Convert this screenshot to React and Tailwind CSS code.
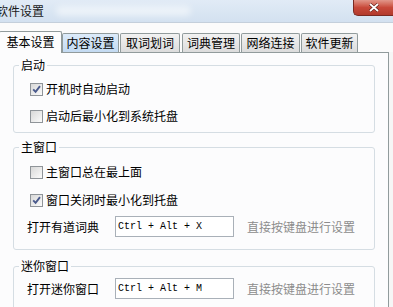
import React from "react";

const Check = ({ checked }) => (
  <span className="w-[13px] h-[13px] border border-[#8f9499] bg-gradient-to-br from-[#d8d8d8] to-[#fbfbfb] flex items-center justify-center shrink-0">
    {checked && (
      <svg width="9" height="9" viewBox="0 0 9 9">
        <path d="M1.2 4.3 L3.6 6.8 L8 1.2" stroke="#4a5a8c" strokeWidth="1.9" fill="none" />
      </svg>
    )}
  </span>
);

const CheckRow = ({ checked, label, className = "" }) => (
  <div className={"h-[18px] flex items-center pl-[16px] " + className}>
    <Check checked={checked} />
    <span className="ml-[3px] leading-[18px]">{label}</span>
  </div>
);

const KeyRow = ({ label, keys, className = "" }) => (
  <div className={"flex items-center pl-[13px] " + className}>
    <span className="w-[88px] leading-[18px]">{label}</span>
    <div className="w-[119px] h-[21px] border border-[#a9b0b8] bg-white flex items-center pl-[2px]">
      <span className="text-[10px] leading-[12px] text-black" style={{ fontFamily: '"Liberation Mono", "DejaVu Sans Mono", monospace' }}>
        {keys}
      </span>
    </div>
    <span className="ml-[13px] text-[#8c8c8c] leading-[18px]">直接按键盘进行设置</span>
  </div>
);

const Group = ({ title, className = "", children }) => (
  <fieldset className={"border border-[#d5dde3] rounded-[3px] ml-[13px] mr-[13px] p-0 " + className}>
    <legend className="ml-[5px] px-[2px] leading-[14px] h-[14px]">{title}</legend>
    {children}
  </fieldset>
);

const tabs = [
  { t: "内容设置", w: "w-[57px]", ml: "ml-0", bg: "bg-gradient-to-b from-[#dcebfa] to-[#c3daf2]" },
  { t: "取词划词", w: "w-[60px]", ml: "ml-[1px]", bg: "bg-gradient-to-b from-[#f2f2f2] to-[#dcdcdc]" },
  { t: "词典管理", w: "w-[58px]", ml: "ml-[2px]", bg: "bg-gradient-to-b from-[#f2f2f2] to-[#dcdcdc]" },
  { t: "网络连接", w: "w-[59px]", ml: "ml-[1px]", bg: "bg-gradient-to-b from-[#f2f2f2] to-[#dcdcdc]" },
  { t: "软件更新", w: "w-[57px]", ml: "ml-[1px]", bg: "bg-gradient-to-b from-[#f2f2f2] to-[#dcdcdc]" },
];

export default function App() {
  return (
    <div
      className="w-[393px] h-[307px] overflow-hidden bg-[#f6f6f6] text-[12px] text-black relative"
      style={{ fontFamily: '"Noto Sans CJK SC", "Noto Sans", sans-serif' }}
    >
      {/* title bar */}
      <div className="h-[23px] bg-gradient-to-b from-[#e1ebf6] to-[#d3e1f0] flex items-center border-b border-[#c4cfdb]">
        <span className="ml-[-4px] text-[12px] leading-[14px] text-[#1a1a1a]">软件设置</span>
        <div className="ml-[12px] w-[135px] h-[10px] rounded-full bg-white/50 blur-[3px]" />
      </div>
      <div className="absolute top-0 right-0 w-[40px] h-[16px] rounded-bl-[5px] border border-t-0 border-r-0 border-[#7a2a22] bg-gradient-to-b from-[#e1968a] via-[#c8493a] to-[#b23a2c] flex items-center justify-center">
        <svg width="12" height="9" viewBox="0 0 12 9">
          <path d="M2 1 L10 8 M10 1 L2 8" stroke="#5a1a14" strokeWidth="3" />
          <path d="M2 1 L10 8 M10 1 L2 8" stroke="#ffffff" strokeWidth="1.8" />
        </svg>
      </div>

      {/* spacer */}
      <div className="h-[8px] bg-[#fbfbfb]" />

      {/* tabs */}
      <div className="h-[21px] flex items-end bg-[#fbfbfb]">
        <div className="relative z-10 w-[63px] h-[22px] -mb-px -ml-px bg-[#fcfcfd] border border-b-0 border-[#919b9c] rounded-t-[2px] flex items-start justify-center pt-[3px] leading-[14px]">
          基本设置
        </div>
        {tabs.map((tb) => (
          <div
            key={tb.t}
            className={`${tb.w} ${tb.ml} ${tb.bg} h-[19px] border border-b-0 border-[#919b9c] rounded-t-[2px] flex items-center justify-center leading-[14px]`}
          >
            {tb.t}
          </div>
        ))}
      </div>

      {/* panel */}
      <div className="-ml-px w-[390px] h-[260px] border border-[#919b9c] bg-[#fcfcfd]">
        <Group title="启动" className="mt-[5px]">
          <div className="pt-[8px] pb-[7px]">
            <CheckRow checked label="开机时自动启动" />
            <CheckRow label="启动后最小化到系统托盘" className="mt-[9px]" />
          </div>
        </Group>
        <Group title="主窗口" className="mt-[7px]">
          <div className="pt-[9px] pb-[12px]">
            <CheckRow label="主窗口总在最上面" />
            <CheckRow checked label="窗口关闭时最小化到托盘" className="mt-[10px]" />
            <KeyRow label="打开有道词典" keys="Ctrl + Alt + X" className="mt-[7px]" />
          </div>
        </Group>
        <Group title="迷你窗口" className="mt-[9px]">
          <div className="pt-[5px] pb-[12px]">
            <KeyRow label="打开迷你窗口" keys="Ctrl + Alt + M" />
          </div>
        </Group>
      </div>
    </div>
  );
}
